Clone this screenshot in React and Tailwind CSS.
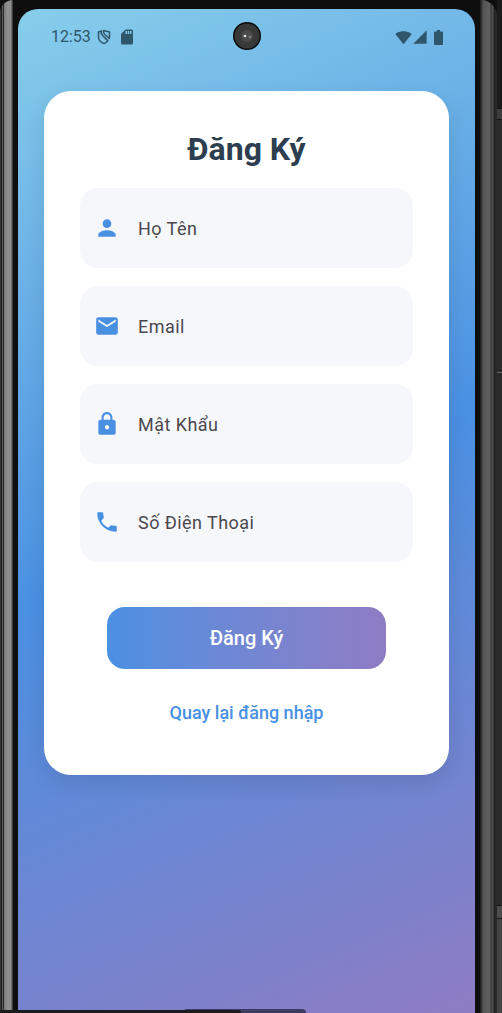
import { MdPerson, MdEmail, MdLock, MdPhone, MdSdCard, MdSignalWifi4Bar, MdSignalCellular4Bar } from "react-icons/md";

const fields = [
  { id: "name", label: "Họ Tên", type: "text", Icon: MdPerson },
  { id: "email", label: "Email", type: "email", Icon: MdEmail },
  { id: "password", label: "Mật Khẩu", type: "password", Icon: MdLock },
  { id: "phone", label: "Số Điện Thoại", type: "tel", Icon: MdPhone },
];

function ShieldIcon() {
  return (
    <svg viewBox="0 0 14 16" className="h-4 w-3.5" fill="none" stroke="currentColor" strokeWidth="1.5" strokeLinejoin="round" aria-hidden="true">
      <path d="M4.500 2L1.500 3V7.500C1.500 10.700 3.700 13.500 7 14.600C8.600 14.100 9.900 13 10.700 11.600L5.300 6.300C4.300 5.300 4 3.600 4.500 2Z" />
      <path d="M6.600 1.500L12.500 3V7.500C12.500 8.200 12.400 8.900 12.200 9.500L7.600 5.200C6.500 4.100 6.300 2.800 6.600 1.500Z" />
    </svg>
  );
}

function BatteryIcon() {
  return (
    <svg viewBox="0 0 9 15" className="ml-1.5 h-[15px] w-[9px]" fill="currentColor" aria-hidden="true">
      <path d="M3 0H6V1.500H8C8.600 1.500 9 1.900 9 2.500V14C9 14.600 8.600 15 8 15H1C.4 15 0 14.600 0 14V2.500C0 1.900 .4 1.500 1 1.500H3Z" />
    </svg>
  );
}

function StatusBar() {
  return (
    <header className="flex h-14 items-center justify-between pr-8 pl-[33px] text-[#2f566b]">
      <div className="flex items-center">
        <time className="text-base">12:53</time>
        <span className="ml-1.5"><ShieldIcon /></span>
        <MdSdCard className="ml-[7px] size-[18px]" />
      </div>
      <div className="flex items-center">
        <MdSignalWifi4Bar className="size-[17px]" />
        <MdSignalCellular4Bar className="size-4" />
        <BatteryIcon />
      </div>
    </header>
  );
}

function Camera() {
  return (
    <svg viewBox="0 0 28 28" className="absolute top-[13px] left-1/2 size-7 -translate-x-1/2" aria-hidden="true">
      <circle cx="14" cy="14" r="14" fill="#080808" />
      <circle cx="14" cy="14" r="12.600" fill="#383838" />
      <circle cx="14" cy="14" r="6" fill="#4a4a4a" />
      <circle cx="12" cy="14" r="1.300" fill="#e4e4e4" />
      <circle cx="17" cy="15" r="1.500" fill="#777" />
    </svg>
  );
}

function Field({ id, label, type, Icon }) {
  return (
    <div className="flex h-20 items-center rounded-[18px] bg-[#f5f7fb] pr-4 pl-3.5">
      <label htmlFor={id} aria-label={label}>
        <Icon className="size-[26px] text-[#4a90e2]" />
      </label>
      <input
        id={id}
        type={type}
        placeholder={label}
        className="ml-[18px] h-full min-w-0 flex-1 bg-transparent text-lg tracking-wide text-[#333] outline-none placeholder:text-[#4b474d]"
      />
    </div>
  );
}

function LeftRail() {
  return (
    <div className="w-[13px] shrink-0 rounded-tl-[20px] bg-[linear-gradient(90deg,#3a3a3a_0px,#3a3a3a_1px,#1c1c1c_1px,#1c1c1c_2px,#5c5c5c_2px,#5c5c5c_3px,#2a2a2a_3px,#2a2a2a_4px,#777_4px,#929292_8px,#8a8a8a_11px,#555_12px,#2a2a2a_13px)]" />
  );
}

function RightRail() {
  return (
    <div className="ml-[5px] flex w-[22px] shrink-0">
      <div className="w-[17px] rounded-tr-[16px] bg-[linear-gradient(90deg,#1c1c1c_0px,#383838_2px,#555_3px,#606060_10px,#2c2c2c_11px,#555_12px,#505050_13px,#262626_14px,#1a1a1a_15px,#3c3c3c_16px,#161616_17px)]" />
      <div className="flex flex-1 flex-col bg-[#2a2a2a]">
        <div className="h-[108px] bg-[#1b1b1b]" />
        <div className="h-3 border-y border-[#161616] bg-[#3c3c3c]" />
        <div className="h-[252px]" />
        <div className="h-px bg-[#666]" />
        <div className="h-[532px]" />
        <div className="h-[14px] border-y border-[#161616] bg-[#4c4c4c]" />
        <div className="flex-1 bg-[#444]" />
      </div>
    </div>
  );
}

export default function App() {
  return (
    <div className="relative flex min-h-screen flex-col bg-[#0e0e0e] font-['Roboto',sans-serif]">
      <div className="flex flex-1">
        <LeftRail />
        <main className="relative mt-[9px] ml-[5px] min-w-0 flex-1 rounded-t-[20px] bg-linear-[156deg] from-[#87ceeb] via-[#4a90e2] to-[#8e7cc3]">
          <StatusBar />
          <Camera />
          <form className="mx-[26px] mt-[26px] rounded-[27px] bg-white px-9 pt-9 pb-[50px] shadow-[0_8px_20px_rgba(0,0,0,0.1)]" onSubmit={(e) => e.preventDefault()}>
            <h1 className="text-center text-[32px] leading-11 font-bold text-[#2c3e50]">Đăng Ký</h1>
            <div className="mt-[17px] flex flex-col gap-[18px]">
              {fields.map((f) => <Field key={f.id} {...f} />)}
            </div>
            <button type="submit" className="mx-auto mt-[45px] block h-[62px] w-[84%] rounded-[18px] bg-linear-to-r from-[#4a90e2] to-[#8e7cc3] text-xl font-medium text-white">Đăng Ký</button>
            <a href="#login" className="mx-auto mt-8 block w-fit text-lg leading-6 font-medium text-[#4a90e2]">Quay lại đăng nhập</a>
          </form>
        </main>
        <RightRail />
      </div>
      <div className="absolute bottom-0 left-0 flex w-full items-end" aria-hidden="true">
        <div className="relative z-10 h-[3px] w-[48%] rounded-tr-[3px] bg-[#1c1b20]" />
        <div className="-ml-14 h-1 w-[121px] rounded-tr-sm bg-[#34345a]/90" />
      </div>
    </div>
  );
}
